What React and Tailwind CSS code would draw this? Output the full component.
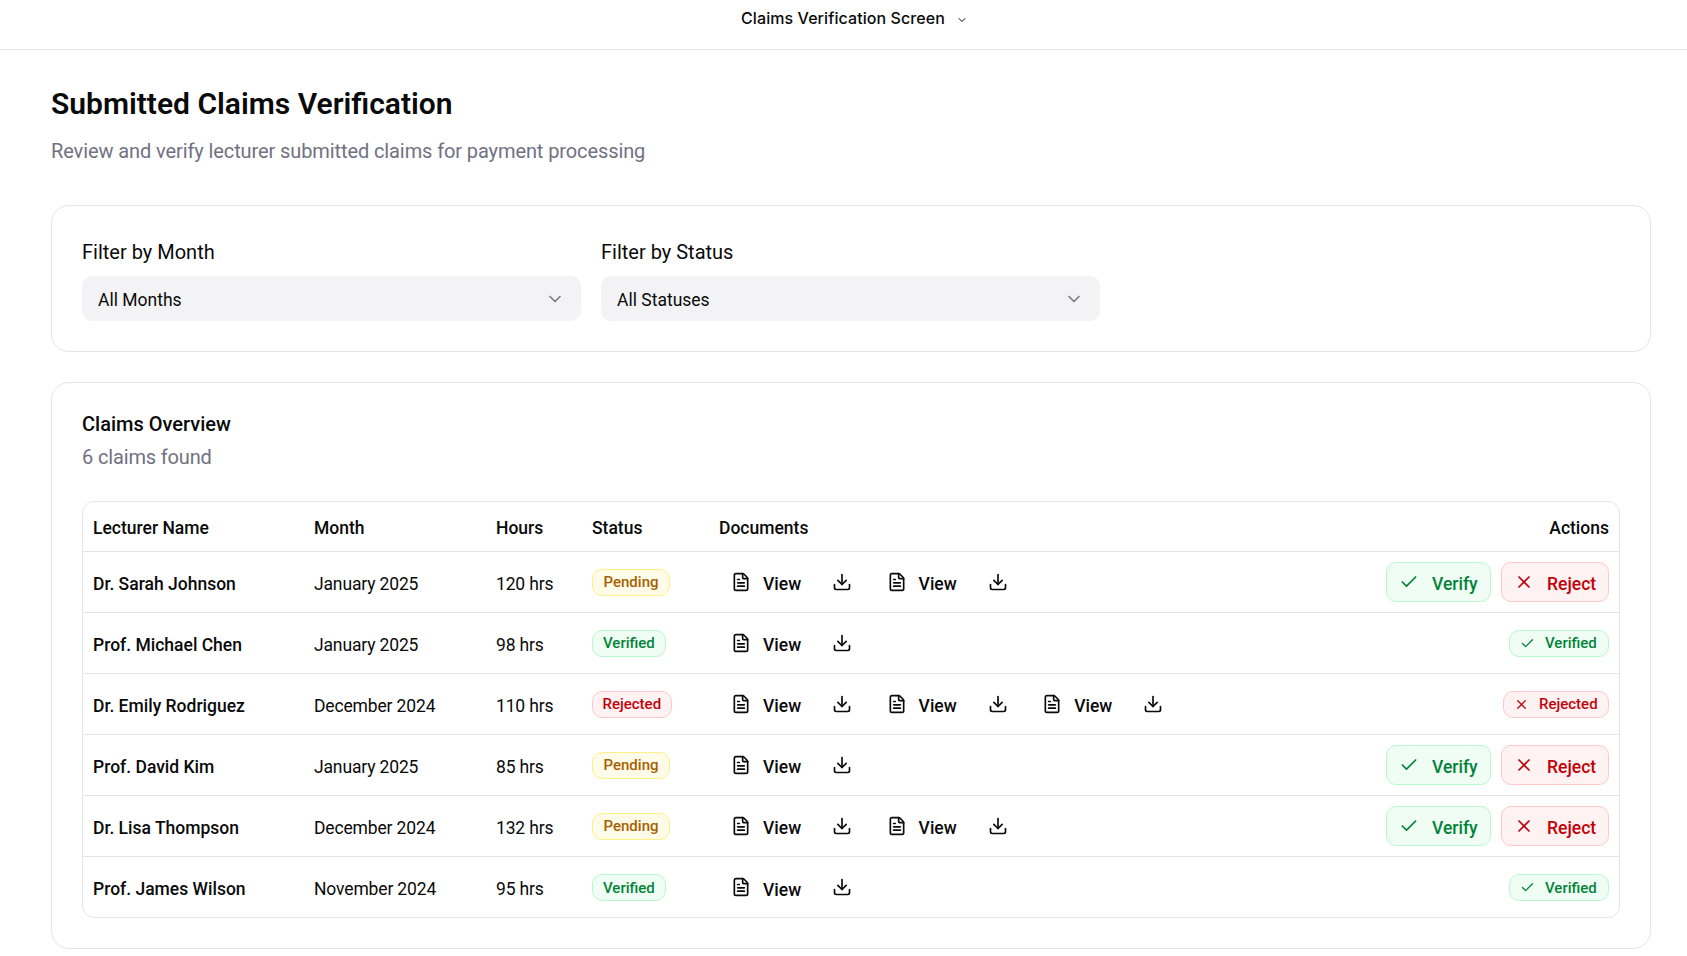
import React from "react";
import { Check, ChevronDown, Download, FileText, X } from "lucide-react";

const rows = [
  ["Dr. Sarah Johnson", "January 2025", "120 hrs", "Pending", 2],
  ["Prof. Michael Chen", "January 2025", "98 hrs", "Verified", 1],
  ["Dr. Emily Rodriguez", "December 2024", "110 hrs", "Rejected", 3],
  ["Prof. David Kim", "January 2025", "85 hrs", "Pending", 1],
  ["Dr. Lisa Thompson", "December 2024", "132 hrs", "Pending", 2],
  ["Prof. James Wilson", "November 2024", "95 hrs", "Verified", 1],
];

function StatusBadge({ status }) {
  const cls =
    status === "Pending"
      ? "px-[10.5px] bg-yellow-50 border-yellow-200 text-yellow-700"
      : status === "Verified"
        ? "px-[10px] bg-green-50 border-green-200 text-green-700"
        : "px-[9.5px] bg-red-50 border-red-200 text-red-700";
  return (
    <div className="flex pt-[1px]">
      <span className={`flex h-[27px] items-center rounded-[10px] border pt-[1px] text-[15px] font-medium ${cls}`}>
        {status}
      </span>
    </div>
  );
}

function DocGroup() {
  return (
    <div className="flex w-[155.6px] items-center">
      <div className="flex w-[44px] items-center pl-[12px]">
        <FileText className="size-[20px] shrink-0" strokeWidth={2} />
      </div>
      <span className="w-[69px] pt-[6px] text-[17.5px] font-medium">View</span>
      <Download className="size-[20px] shrink-0" strokeWidth={2} />
    </div>
  );
}

function Actions({ status }) {
  if (status === "Pending") {
    return (
      <div className="flex justify-end gap-[10px]">
        <button className="flex h-[40px] w-[105px] items-center rounded-[10px] border border-green-200 bg-green-50 pl-[12px] text-[17.5px] font-medium text-green-700">
          <Check className="mr-[13px] size-[20px]" />
          <span className="pt-[6px]">Verify</span>
        </button>
        <button className="flex h-[40px] w-[108px] items-center rounded-[10px] border border-red-200 bg-red-50 pl-[12px] text-[17.5px] font-medium text-red-700">
          <X className="mr-[13px] size-[20px]" />
          <span className="pt-[6px]">Reject</span>
        </button>
      </div>
    );
  }
  const verified = status === "Verified";
  return (
    <div className="flex justify-end pt-[1px]">
      <span
        className={`inline-flex h-[27px] items-center rounded-[10px] border pl-[10px] text-[15px] font-medium ${
          verified
            ? "w-[100px] border-green-200 bg-green-50 text-green-700"
            : "w-[106px] border-red-200 bg-red-50 text-red-700"
        }`}
      >
        {verified ? <Check className="mr-[10px] size-[15px]" /> : <X className="mr-[10px] size-[15px]" />}
        <span className="pt-[1px]">{status}</span>
      </span>
    </div>
  );
}

function Filter({ label, value }) {
  return (
    <div className="w-[499px]">
      <label className="mb-[10px] block pt-[2px] text-[20px] leading-[28px] text-[#0a0a0a]">{label}</label>
      <div className="flex h-[45px] items-center justify-between rounded-[10px] bg-[#f3f3f5] pl-[16px] pr-[16px] text-[17.5px]">
        <span className="pt-[3px]">{value}</span>
        <ChevronDown className="size-[20px] text-[#0a0a0a] opacity-50" />
      </div>
    </div>
  );
}

export default function App() {
  return (
    <div className="min-h-screen bg-white text-[#0a0a0a] [font-family:Roboto,'Noto_Sans',sans-serif]">
      <header className="flex h-[50px] items-start justify-center border-b border-[#e5e5e5] pl-[22px] pt-[6px]">
        <span className="text-[16px] leading-[24px] font-medium tracking-[0.08px] [font-family:Inter,sans-serif]">Claims Verification Screen</span>
        <ChevronDown className="ml-[11px] mt-[8px] size-[12px]" />
      </header>
      <main className="pb-[9px] pl-[51px] pr-[36px] pt-[35px]">
        <h1 className="text-[30px] leading-[38px] font-semibold">Submitted Claims Verification</h1>
        <p className="mb-[39px] mt-[13px] text-[20px] leading-[30px] tracking-[-0.1px] text-[#717182]">
          Review and verify lecturer submitted claims for payment processing
        </p>
        <section className="mb-[30px] flex gap-[20px] rounded-[18px] border border-[#e5e5e5] p-[30px]">
          <Filter label="Filter by Month" value="All Months" />
          <Filter label="Filter by Status" value="All Statuses" />
        </section>
        <section className="rounded-[18px] border border-[#e5e5e5] p-[30px]">
          <h2 className="text-[20px] leading-[22px] font-medium">Claims Overview</h2>
          <p className="mb-[29px] mt-[7px] text-[20px] leading-[30px] tracking-[-0.15px] text-[#717182]">6 claims found</p>
          <div className="overflow-hidden rounded-[12px] border border-[#e5e5e5]">
            <table className="w-full table-fixed border-collapse text-[17.5px]">
              <thead>
                <tr className="h-[49px] border-b border-[#e5e5e5] text-left">
                  <th className="w-[221px] px-[10px] pt-[3px] font-medium">Lecturer Name</th>
                  <th className="w-[182px] px-[10px] pt-[3px] font-medium">Month</th>
                  <th className="w-[96px] px-[10px] pt-[3px] font-medium">Hours</th>
                  <th className="w-[127px] px-[10px] pt-[3px] font-medium">Status</th>
                  <th className="w-[500px] px-[10px] pt-[3px] font-medium">Documents</th>
                  <th className="px-[10px] pt-[3px] text-right font-medium">Actions</th>
                </tr>
              </thead>
              <tbody>
                {rows.map((r, i) => (
                  <tr key={r[0]} className={`h-[61px] ${i < rows.length - 1 ? "border-b border-[#e5e5e5]" : ""}`}>
                    <td className="px-[10px] pt-[5px] font-medium">{r[0]}</td>
                    <td className="px-[10px] pt-[5px] tracking-[-0.15px]">{r[1]}</td>
                    <td className="px-[10px] pt-[5px] tracking-[-0.15px]">{r[2]}</td>
                    <td className="px-[10px]">
                      <StatusBadge status={r[3]} />
                    </td>
                    <td className="px-[10px]">
                      <div className="flex">
                        {Array.from({ length: r[4] }).map((_, k) => (
                          <DocGroup key={k} />
                        ))}
                      </div>
                    </td>
                    <td className="px-[10px]">
                      <Actions status={r[3]} />
                    </td>
                  </tr>
                ))}
              </tbody>
            </table>
          </div>
        </section>
      </main>
    </div>
  );
}
